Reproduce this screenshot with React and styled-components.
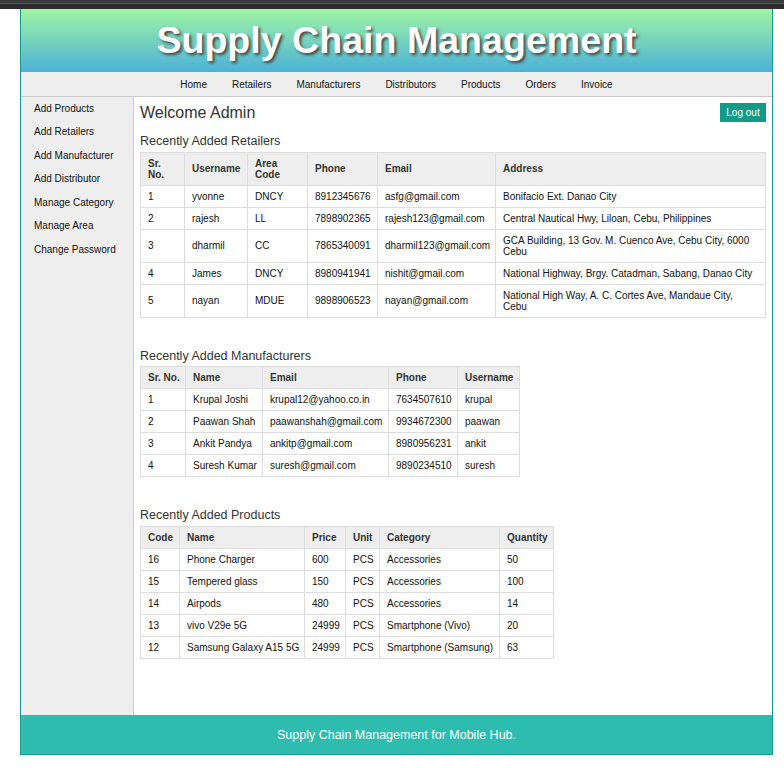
import React from "react";
import styled, { createGlobalStyle } from "styled-components";

const Global = createGlobalStyle`
  html, body { margin: 0; padding: 0; background: #fff; }
  body { font-family: "Liberation Sans", Arial, sans-serif; color: #111; }
  * { box-sizing: border-box; }
`;

const TopStrip = styled.div`
  height: 9px;
  background: linear-gradient(#3a3a3a 0, #3a3a3a 3px, #5a5a5a 3px, #5a5a5a 4px, #2c2c2c 4px, #2c2c2c 9px);
`;

const Frame = styled.div`
  margin-left: 20px;
  width: 753px;
  border-left: 1px solid #109e8e;
  border-right: 1px solid #109e8e;
  border-bottom: 1px solid #109e8e;
`;

const Banner = styled.header`
  height: 63px;
  background: linear-gradient(#9ff5a3, #4cb1d7);
  display: flex;
  align-items: center;
  justify-content: center;
`;

const Title = styled.h1`
  margin: 0;
  font-size: 37.6px;
  line-height: 1;
  font-weight: bold;
  color: #fff;
  text-shadow: 2px 2px 3px #444;
  padding-top: 1px;
`;

const NavBar = styled.nav`
  height: 25px;
  background: #eee;
  border-bottom: 1px solid #ccc;
  display: flex;
  justify-content: center;
  align-items: center;
`;

const NavItem = styled.a`
  font-size: 10px;
  color: #111;
  padding: 0 12.5px;
  text-decoration: none;
`;

const Body = styled.div`
  display: flex;
  min-height: 618px;
`;

const Sidebar = styled.aside`
  width: 113px;
  flex: none;
  background: #eee;
  border-right: 1px solid #ccc;
`;

const SideLink = styled.a`
  display: block;
  font-size: 10px;
  line-height: 11.5px;
  padding: 5.75px 0 6.25px 13px;
  color: #111;
  text-decoration: none;
`;

const Main = styled.main`
  flex: 1;
  padding: 6px 7px 20px 6px;
`;

const TopRow = styled.div`
  display: flex;
  justify-content: space-between;
  align-items: flex-start;
`;

const Welcome = styled.h2`
  margin: 0;
  font-size: 16px;
  font-weight: normal;
  color: #333;
  line-height: 19px;
`;

const LogoutButton = styled.button`
  width: 46px;
  height: 19px;
  border: none;
  padding: 0;
  background: #129a88;
  color: #fff;
  font-family: "Liberation Sans", Arial, sans-serif;
  font-size: 10px;
`;

const Section = styled.section`
  margin-top: ${(p) => p.$top}px;
`;

const SectionTitle = styled.h3`
  margin: 0 0 3px 0;
  font-size: 12.5px;
  font-weight: normal;
  color: #333;
  line-height: 14.5px;
`;

const Table = styled.table`
  border-collapse: collapse;
  table-layout: fixed;
  width: ${(p) => p.$width}px;
  font-size: 10px;
  line-height: 11px;
  white-space: ${(p) => (p.$nowrap ? "nowrap" : "normal")};
  th, td {
    border: 1px solid #ddd;
    padding: 5px 7px;
    text-align: left;
    vertical-align: middle;
  }
  th {
    background: #eee;
    font-weight: bold;
    color: #333;
  }
  td { color: #111; }
`;

function DataTable({ widths, headers, rows, nowrap }) {
  const total = widths.reduce((a, b) => a + b, 0);
  return (
    <Table $width={total} $nowrap={nowrap}>
      <colgroup>
        {widths.map((w, i) => (
          <col key={i} style={{ width: w }} />
        ))}
      </colgroup>
      <thead>
        <tr>
          {headers.map((h) => (
            <th key={h}>{h}</th>
          ))}
        </tr>
      </thead>
      <tbody>
        {rows.map((r, i) => (
          <tr key={i}>
            {r.map((c, j) => (
              <td key={j}>{c}</td>
            ))}
          </tr>
        ))}
      </tbody>
    </Table>
  );
}

const navItems = ["Home", "Retailers", "Manufacturers", "Distributors", "Products", "Orders", "Invoice"];
const sideItems = [
  "Add Products",
  "Add Retailers",
  "Add Manufacturer",
  "Add Distributor",
  "Manage Category",
  "Manage Area",
  "Change Password",
];

const retailers = [
  ["1", "yvonne", "DNCY", "8912345676", "asfg@gmail.com", "Bonifacio Ext. Danao City"],
  ["2", "rajesh", "LL", "7898902365", "rajesh123@gmail.com", "Central Nautical Hwy, Liloan, Cebu, Philippines"],
  ["3", "dharmil", "CC", "7865340091", "dharmil123@gmail.com", "GCA Building, 13 Gov. M. Cuenco Ave, Cebu City, 6000 Cebu"],
  ["4", "James", "DNCY", "8980941941", "nishit@gmail.com", "National Highway, Brgy. Catadman, Sabang, Danao City"],
  ["5", "nayan", "MDUE", "9898906523", "nayan@gmail.com", "National High Way, A. C. Cortes Ave, Mandaue City, Cebu"],
];

const manufacturers = [
  ["1", "Krupal Joshi", "krupal12@yahoo.co.in", "7634507610", "krupal"],
  ["2", "Paawan Shah", "paawanshah@gmail.com", "9934672300", "paawan"],
  ["3", "Ankit Pandya", "ankitp@gmail.com", "8980956231", "ankit"],
  ["4", "Suresh Kumar", "suresh@gmail.com", "9890234510", "suresh"],
];

const products = [
  ["16", "Phone Charger", "600", "PCS", "Accessories", "50"],
  ["15", "Tempered glass", "150", "PCS", "Accessories", "100"],
  ["14", "Airpods", "480", "PCS", "Accessories", "14"],
  ["13", "vivo V29e 5G", "24999", "PCS", "Smartphone (Vivo)", "20"],
  ["12", "Samsung Galaxy A15 5G", "24999", "PCS", "Smartphone (Samsung)", "63"],
];

const Footer = styled.footer`
  height: 39px;
  background: #2dbcad;
  color: #fff;
  font-size: 12.5px;
  display: flex;
  align-items: center;
  justify-content: center;
`;

export default function App() {
  return (
    <>
      <Global />
      <TopStrip />
      <Frame>
        <Banner>
          <Title>Supply Chain Management</Title>
        </Banner>
        <NavBar>
          {navItems.map((n) => (
            <NavItem key={n}>{n}</NavItem>
          ))}
        </NavBar>
        <Body>
          <Sidebar>
            {sideItems.map((s) => (
              <SideLink key={s}>{s}</SideLink>
            ))}
          </Sidebar>
          <Main>
            <TopRow>
              <Welcome>Welcome Admin</Welcome>
              <LogoutButton>Log out</LogoutButton>
            </TopRow>
            <Section $top={12}>
              <SectionTitle>Recently Added Retailers</SectionTitle>
              <DataTable
                widths={[44, 63, 60, 70, 118, 270]}
                headers={["Sr. No.", "Username", "Area Code", "Phone", "Email", "Address"]}
                rows={retailers}
              />
            </Section>
            <Section $top={31}>
              <SectionTitle>Recently Added Manufacturers</SectionTitle>
              <DataTable
                nowrap
                widths={[45, 77, 126, 69, 62]}
                headers={["Sr. No.", "Name", "Email", "Phone", "Username"]}
                rows={manufacturers}
              />
            </Section>
            <Section $top={31}>
              <SectionTitle>Recently Added Products</SectionTitle>
              <DataTable
                nowrap
                widths={[39, 125, 41, 34, 120, 54]}
                headers={["Code", "Name", "Price", "Unit", "Category", "Quantity"]}
                rows={products}
              />
            </Section>
          </Main>
        </Body>
        <Footer>Supply Chain Management for Mobile Hub.</Footer>
      </Frame>
    </>
  );
}
